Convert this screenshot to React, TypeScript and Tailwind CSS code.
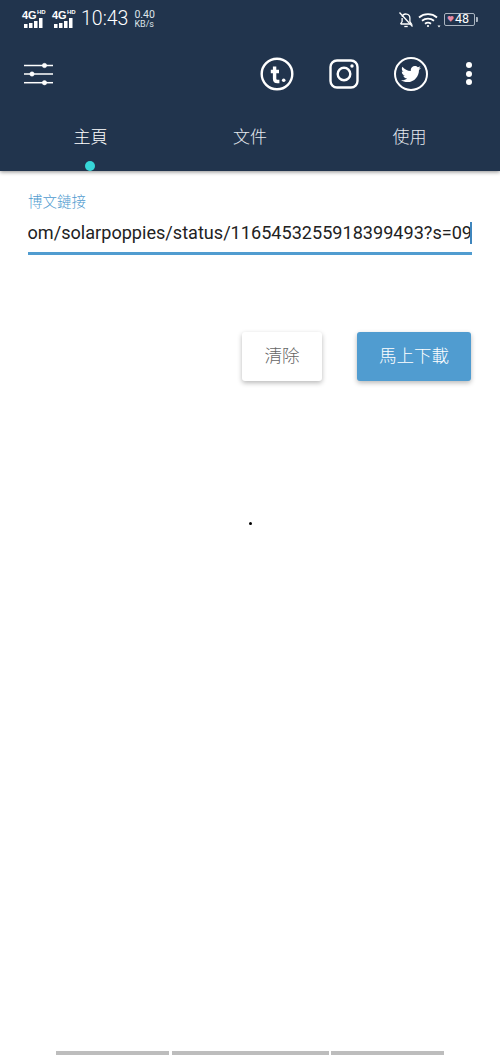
import { FaTwitter } from "react-icons/fa";

const CJK = '"Roboto","Noto Sans CJK TC",sans-serif';

function Signal() {
  return (
    <div className="relative w-[24px] h-[19px]">
      <span className="absolute left-0 top-[0px] text-[11px] leading-[11px] font-bold text-white font-['Liberation_Sans']">4G</span>
      <span className="absolute left-[15px] top-[-2px] text-[6px] leading-[8px] font-bold text-white font-['Liberation_Sans']">HD</span>
      <svg className="absolute left-0 top-[5px]" width="24" height="14" viewBox="0 0 24 14" fill="#fff">
        <rect x="2" y="9" width="3.500" height="4" />
        <rect x="7" y="8" width="3.500" height="5" />
        <rect x="12" y="6" width="3.500" height="7" />
        <rect x="17" y="3" width="3.500" height="10" />
      </svg>
    </div>
  );
}

function Sliders() {
  return (
    <svg width="32" height="26" viewBox="0 0 32 26" fill="#fff" stroke="#fff" strokeWidth="1.500">
      <line x1="1" y1="4.500" x2="30" y2="4.500" />
      <circle cx="21.500" cy="4.500" r="2.200" strokeWidth="0.500" />
      <line x1="1" y1="13" x2="30" y2="13" />
      <circle cx="9" cy="13" r="2.200" strokeWidth="0.500" />
      <line x1="1" y1="21.700" x2="30" y2="21.700" />
      <circle cx="21.500" cy="21.700" r="2.200" strokeWidth="0.500" />
    </svg>
  );
}

function Tumblr() {
  return (
    <svg width="34" height="34" viewBox="0 0 34 34" fill="none" stroke="#fff">
      <circle cx="17" cy="17" r="15.300" strokeWidth="2.400" />
      <path d="M14.600 9.500v12.200c0 2 1 2.800 2.800 2.800h2M10.800 14.500h8.200" strokeWidth="3.400" />
      <circle cx="23.700" cy="23.300" r="1.800" fill="#fff" stroke="none" />
    </svg>
  );
}

function Instagram() {
  return (
    <svg width="30" height="30" viewBox="0 0 30 30" fill="none" stroke="#fff">
      <rect x="1.500" y="1.500" width="27" height="27" rx="6.500" strokeWidth="2.400" />
      <circle cx="15" cy="15" r="6.300" strokeWidth="2.400" />
      <circle cx="23" cy="7" r="1.700" fill="#fff" stroke="none" />
    </svg>
  );
}

function Twitter() {
  return (
    <div className="w-[34px] h-[34px] rounded-full border-[2.400px] border-white flex items-center justify-center">
      <FaTwitter className="text-white w-[20px] h-[20px]" />
    </div>
  );
}

function StatusRight() {
  return (
    <div className="flex items-center">
      <svg width="16" height="17" viewBox="0 0 16 17" fill="none" stroke="#fff" strokeWidth="1.300">
        <path d="M2.500 13h11l-1.600-2.400V7a4 4 0 0 0-7.800-1.200M4.100 7v3.600L2.500 13" />
        <path d="M6.300 15.500h3.400" />
        <path d="M1.500 1.500 14.500 15.500" />
      </svg>
      <svg className="ml-[4px]" width="23" height="17" viewBox="0 0 23 17" fill="none" stroke="#fff" strokeWidth="1.800">
        <path d="M1 6.500a14 14 0 0 1 18 0" />
        <path d="M4 9.800a9.500 9.500 0 0 1 12 0" />
        <path d="M7 12.800a5 5 0 0 1 6 0" />
        <circle cx="10" cy="15" r="1.100" fill="#fff" stroke="none" />
        <path d="M19.500 14.500h3l-1.500 2z" fill="#fff" stroke="none" />
      </svg>
      <div className="ml-[3px] w-[31px] h-[13px] rounded-[2px] border border-[#aab4c0] flex items-center pl-[2px]">
        <span className="text-[7px] leading-none text-[#e58aa6]">♥</span>
        <span className="ml-[1px] text-[12.500px] leading-none text-white">48</span>
      </div>
      <div className="ml-[1px] w-[2px] h-[5px] bg-[#aab4c0] rounded-r-[1px]" />
    </div>
  );
}

export default function App() {
  return (
    <div className="w-[500px] h-[1055px] bg-white flex flex-col overflow-hidden" style={{ fontFamily: CJK }}>
      <header className="h-[171px] bg-[#21344d] shadow-[0_1px_4px_rgba(0,0,0,0.45)] flex flex-col shrink-0 relative">
        <div className="h-[38px] pl-[22px] pr-[22px] flex items-center justify-between">
          <div className="flex items-center h-full">
            <Signal />
            <div className="w-[6px]" />
            <Signal />
            <span className="ml-[5px] text-[19.500px] leading-none text-white font-light">10:43</span>
            <div className="ml-[6px] flex flex-col text-[#dfe4ea] leading-none">
              <span className="text-[10.500px] leading-[10px]">0.40</span>
              <span className="text-[9px] leading-[9px]">KB/s</span>
            </div>
          </div>
          <StatusRight />
        </div>
        <div className="h-[71px] pl-[23px] pr-[28px] flex items-center justify-between">
          <Sliders />
          <div className="flex items-center">
            <Tumblr />
            <div className="w-[35px]" />
            <Instagram />
            <div className="w-[35px]" />
            <Twitter />
            <div className="w-[44px] flex justify-end">
              <div className="flex flex-col gap-[2.500px]">
                <span className="w-[6px] h-[6px] rounded-full bg-white" />
                <span className="w-[6px] h-[6px] rounded-full bg-white" />
                <span className="w-[6px] h-[6px] rounded-full bg-white" />
              </div>
            </div>
          </div>
        </div>
        <nav className="grid grid-cols-[181px_138px_181px] text-center text-[17px] leading-[22px] mt-[17px] font-light">
          <span className="text-white">主頁</span>
          <span className="text-[#e6eaef]">文件</span>
          <span className="text-[#e6eaef]">使用</span>
        </nav>
        <span className="absolute left-[85px] top-[161px] w-[10px] h-[10px] rounded-full bg-[#36d6d8]" />
      </header>

      <main className="pl-[28px] pr-[28px] flex flex-col flex-1">
        <label className="mt-[23px] text-[14.500px] leading-[18px] text-[#4f9bcf] font-light">博文鏈接</label>
        <div className="mt-[10px] h-[33px] border-b-[3px] border-[#509cd0] flex justify-end overflow-hidden relative">
          <span className="text-[18.100px] leading-[22px] text-[#222] whitespace-nowrap">om/solarpoppies/status/1165453255918399493?s=09</span>
          <span className="absolute right-0 top-0 w-[2px] h-[22px] bg-[#3f86bd]" />
        </div>
        <div className="mt-[77px] pr-[1px] flex justify-end">
          <button className="w-[80px] h-[49px] rounded-[3px] bg-white shadow-[0_2px_5px_rgba(0,0,0,0.28)] text-[17.500px] text-[#666] font-light">清除</button>
          <button className="ml-[35px] w-[114px] h-[49px] rounded-[3px] bg-[#509cd0] shadow-[0_2px_5px_rgba(0,0,0,0.28)] text-[17.500px] text-white font-light">馬上下載</button>
        </div>
        <div className="mt-[141px] flex justify-center">
          <span className="w-[3px] h-[3px] rounded-full bg-black" />
        </div>
      </main>

      <footer className="h-[4px] flex justify-center gap-[2.500px] shrink-0">
        <span className="w-[113px] bg-[#bdbdbd]" />
        <span className="w-[157px] bg-[#bdbdbd]" />
        <span className="w-[113px] bg-[#bdbdbd]" />
      </footer>
    </div>
  );
}
